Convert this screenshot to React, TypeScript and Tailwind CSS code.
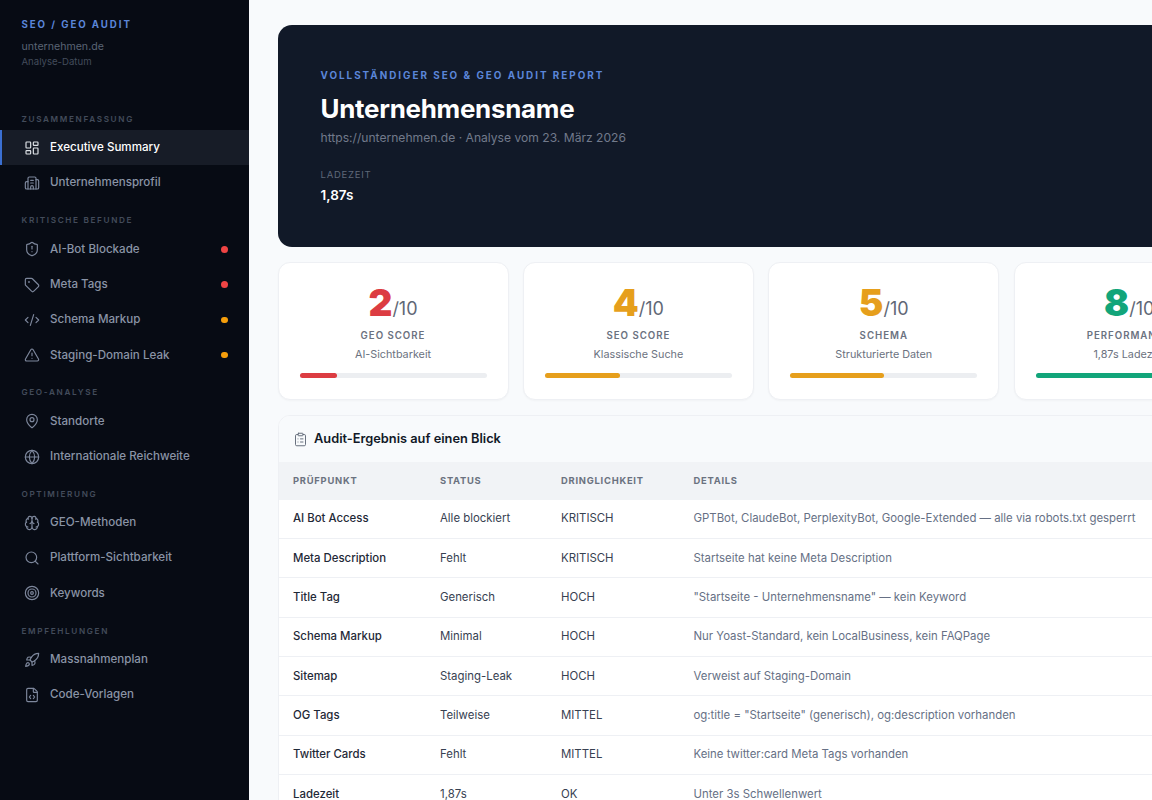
import React from "react";
import {
  LayoutDashboard, Building2, ShieldAlert, Tag, CodeXml, TriangleAlert, MapPin, Globe, Brain,
  Search, Target, Rocket, FileCode, ClipboardList,
} from "lucide-react";

type Item = { label: string; icon: React.ElementType; dot?: string; active?: boolean };
const nav: { title: string; items: Item[] }[] = [
  { title: "ZUSAMMENFASSUNG", items: [
    { label: "Executive Summary", icon: LayoutDashboard, active: true },
    { label: "Unternehmensprofil", icon: Building2 },
  ] },
  { title: "KRITISCHE BEFUNDE", items: [
    { label: "AI-Bot Blockade", icon: ShieldAlert, dot: "bg-[#ef4444]" },
    { label: "Meta Tags", icon: Tag, dot: "bg-[#ef4444]" },
    { label: "Schema Markup", icon: CodeXml, dot: "bg-[#f59e0b]" },
    { label: "Staging-Domain Leak", icon: TriangleAlert, dot: "bg-[#f59e0b]" },
  ] },
  { title: "GEO-ANALYSE", items: [
    { label: "Standorte", icon: MapPin },
    { label: "Internationale Reichweite", icon: Globe },
  ] },
  { title: "OPTIMIERUNG", items: [
    { label: "GEO-Methoden", icon: Brain },
    { label: "Plattform-Sichtbarkeit", icon: Search },
    { label: "Keywords", icon: Target },
  ] },
  { title: "EMPFEHLUNGEN", items: [
    { label: "Massnahmenplan", icon: Rocket },
    { label: "Code-Vorlagen", icon: FileCode },
  ] },
];

const scores = [
  { v: "2", label: "GEO SCORE", sub: "AI-Sichtbarkeit", color: "text-[#dc3c42]", bar: "bg-[#dc3c42]", w: "20%" },
  { v: "4", label: "SEO SCORE", sub: "Klassische Suche", color: "text-[#e69f1c]", bar: "bg-[#e69f1c]", w: "40%" },
  { v: "5", label: "SCHEMA", sub: "Strukturierte Daten", color: "text-[#e69f1c]", bar: "bg-[#e69f1c]", w: "50%" },
  { v: "8", label: "PERFORMANCE", sub: "1,87s Ladezeit", color: "text-[#12a57a]", bar: "bg-[#12a57a]", w: "80%" },
];

const rows = [
  ["AI Bot Access", "Alle blockiert", "KRITISCH", "GPTBot, ClaudeBot, PerplexityBot, Google-Extended — alle via robots.txt gesperrt"],
  ["Meta Description", "Fehlt", "KRITISCH", "Startseite hat keine Meta Description"],
  ["Title Tag", "Generisch", "HOCH", "\"Startseite - Unternehmensname\" — kein Keyword"],
  ["Schema Markup", "Minimal", "HOCH", "Nur Yoast-Standard, kein LocalBusiness, kein FAQPage"],
  ["Sitemap", "Staging-Leak", "HOCH", "Verweist auf Staging-Domain"],
  ["OG Tags", "Teilweise", "MITTEL", "og:title = \"Startseite\" (generisch), og:description vorhanden"],
  ["Twitter Cards", "Fehlt", "MITTEL", "Keine twitter:card Meta Tags vorhanden"],
  ["Ladezeit", "1,87s", "OK", "Unter 3s Schwellenwert"],
];

const cols = "grid grid-cols-[147px_121px_132.5px_1fr]";

export default function App() {
  return (
    <div className="flex h-[800px] w-[1152px] overflow-hidden bg-[#f8fafc] font-['Inter',sans-serif]">
      <aside className="h-full w-[249px] shrink-0 bg-[#070b14]">
        <div className="px-[21.5px] pt-[19px]">
          <div className="text-[9.7px] leading-[12px] font-bold tracking-[0.2em] text-[#5b86d9]">SEO / GEO AUDIT</div>
          <div className="mt-[8.5px] text-[10.6px] leading-[14px] text-[#5a6474]">unternehmen.de</div>
          <div className="mt-[2px] text-[9.6px] leading-[12px] text-[#434c5b]">Analyse-Datum</div>
        </div>
        <nav className="mt-[45.4px]">
          {nav.map((s) => (
            <div key={s.title}>
              <div className="mt-[13.6px] px-[21.5px] pb-[5.3px] text-[8.2px] leading-[12px] font-semibold tracking-[0.2em] text-[#434c5b]">{s.title}</div>
              {s.items.map((it) => (
                <div
                  key={it.label}
                  className={`flex h-[35.3px] items-center gap-[10.5px] border-l-[2.5px] pl-[21.5px] pr-[21.5px] ${it.active ? "border-[#3b6fd1] bg-[#171c27] text-white" : "border-transparent text-[#8a94a6]"}`}
                >
                  <it.icon className={`h-[16px] w-[16px] shrink-0 ${it.active ? "text-[#dfe3e8]" : "text-[#7d879c]"}`} strokeWidth={1.75} />
                  <span className="flex-1 text-[11.6px] font-medium whitespace-nowrap">{it.label}</span>
                  {it.dot && <span className={`h-[6.5px] w-[6.5px] rounded-full ${it.dot}`} />}
                </div>
              ))}
            </div>
          ))}
        </nav>
      </aside>

      <main className="min-w-[1020px] shrink-0 pl-[28.5px] pt-[25px]">
        <section className="h-[222px] w-[1000px] rounded-[14px] bg-[#111928] pl-[43px] pt-[44px]">
          <div className="text-[9.9px] leading-[12px] font-bold tracking-[0.2em] text-[#5b86d9]">VOLLSTÄNDIGER SEO &amp; GEO AUDIT REPORT</div>
          <h1 className="mt-[12px] text-[25.9px] leading-[32px] font-bold tracking-[-0.01em] text-white">Unternehmensname</h1>
          <div className="mt-[5px] text-[12.1px] leading-[16px] text-[#717a8b]">https://unternehmen.de · Analyse vom 23. März 2026</div>
          <div className="mt-[23px] text-[9.5px] leading-[12px] tracking-[0.08em] text-[#5f6878]">LADEZEIT</div>
          <div className="mt-[5px] text-[13.5px] leading-[18px] font-semibold text-white">1,87s</div>
        </section>

        <section className="mt-[14.5px] flex gap-[14.4px]">
          {scores.map((c) => (
            <div key={c.label} className="h-[138.5px] w-[231px] shrink-0 rounded-[12px] border border-[#eef0f4] bg-white px-[21px] pt-[20px] shadow-[0_1px_2px_rgba(15,23,42,0.03)]">
              <div className="flex h-[40px] items-end justify-center">
                <span className={`text-[37px] leading-[40px] font-black ${c.color}`}>{c.v}</span>
                <span className="pb-[2px] text-[18px] leading-[24px] text-[#5f6876]">/10</span>
              </div>
              <div className="mt-[6px] text-center text-[9.7px] leading-[14px] font-semibold tracking-[0.1em] whitespace-nowrap text-[#6b7280]">{c.label}</div>
              <div className="mt-[4.5px] text-center text-[10.8px] leading-[16px] whitespace-nowrap text-[#6b7280]">{c.sub}</div>
              <div className="mt-[10px] h-[5px] w-full rounded-full bg-[#eceef1]">
                <div className={`h-full rounded-full ${c.bar}`} style={{ width: c.w }} />
              </div>
            </div>
          ))}
        </section>

        <section className="mt-[15px] w-[1000px] overflow-hidden rounded-[12px] border border-[#eef0f4] bg-white">
          <div className="flex h-[46px] items-center gap-[6px] bg-[#f8fafc] pl-[14.5px]">
            <ClipboardList className="h-[15px] w-[15px] text-[#5f6876]" strokeWidth={1.5} />
            <span className="text-[12.8px] font-semibold text-[#111827]">Audit-Ergebnis auf einen Blick</span>
          </div>
          <div className={`${cols} h-[37.5px] items-center bg-[#f1f3f6] text-[9.4px] font-bold tracking-[0.08em] text-[#6b7280]`}>
            <div className="pl-[14.5px]">PRÜFPUNKT</div>
            <div className="pl-[14.5px]">STATUS</div>
            <div className="pl-[14.5px]">DRINGLICHKEIT</div>
            <div className="pl-[14.5px]">DETAILS</div>
          </div>
          {rows.map((r) => (
            <div key={r[0]} className={`${cols} h-[39.4px] items-center border-b border-[#eef0f4] text-[11.4px]`}>
              <div className="pl-[14.5px] font-medium text-[#1f2937]">{r[0]}</div>
              <div className="pl-[14.5px] text-[#374151]">{r[1]}</div>
              <div className="pl-[14.5px] text-[#374151]">{r[2]}</div>
              <div className="pl-[14.5px] whitespace-nowrap text-[#667085]">{r[3]}</div>
            </div>
          ))}
        </section>
      </main>
    </div>
  );
}
